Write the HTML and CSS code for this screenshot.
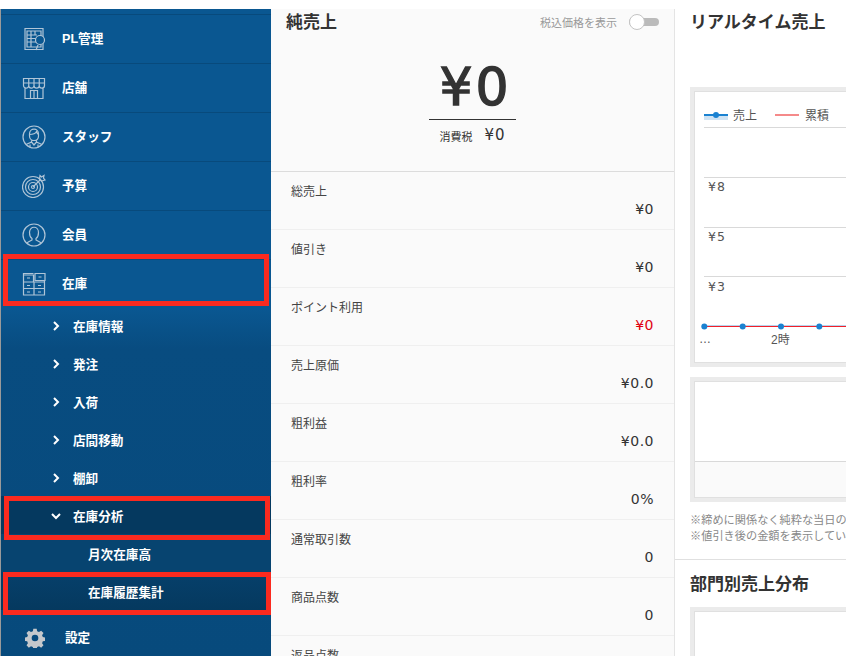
FILE: index.html
```html
<!DOCTYPE html>
<html lang="ja">
<head>
<meta charset="utf-8">
<title>純売上</title>
<link rel="stylesheet" href="styles.css">
</head>
<body>
<div class="page">
  <nav class="sidebar">
    <div class="nav-cap"></div>
    <a class="nav-item">
      <svg class="nav-icon" viewBox="0 0 24 24"><path d="M3 1.500h18v21H3zM5 4h14v16H5zM5 8h10M5 11.500h10M5 15h10M9 4v16M13 4v4"/><circle class="icon-fill" cx="18" cy="13" r="4.500"/><path d="M16 18l-2 5"/></svg>
      <span>PL管理</span>
    </a>
    <a class="nav-item">
      <svg class="nav-icon" viewBox="0 0 24 24"><path d="M1.500 2.500h21v4.500h-21zM1.500 7v2.500a2.500 2.500 0 0 0 5.250 0 2.600 2.600 0 0 0 5.250 0 2.600 2.600 0 0 0 5.250 0 2.600 2.600 0 0 0 5.250 0V7M6.750 2.500v7M12 2.500v7M17.250 2.500v7M3 12v10.500h18V12M8.500 22.500v-8h7v8M12 14.500v8"/></svg>
      <span>店舗</span>
    </a>
    <a class="nav-item">
      <svg class="nav-icon" viewBox="0 0 24 24"><circle cx="12" cy="12" r="11"/><path d="M7.500 9c0-6.500 9-6.500 9 0v2c0 6-9 6-9 0zM7.500 9.500c3 0 6-1 7-3 .3 1.500 1 2.500 2 3M9.500 15.500v1.500l-5.500 2.500M14.500 15.500v1.500l5.500 2.500M9.500 17l2.500 3 2.500-3M8 22.500v-3M16 22.500v-3"/></svg>
      <span>スタッフ</span>
    </a>
    <a class="nav-item">
      <svg class="nav-icon" viewBox="0 0 24 24"><circle cx="11" cy="13" r="10.500"/><circle cx="11" cy="13" r="7.500"/><circle cx="11" cy="13" r="4.500"/><circle cx="11" cy="13" r="1.500"/><path d="M11 13l8-8M18 1.500l-.5 3.500 2 2 3.500-1-1.500-2 .5-2.500-2.500 1.500z"/></svg>
      <span>予算</span>
    </a>
    <a class="nav-item">
      <svg class="nav-icon" viewBox="0 0 24 24"><circle cx="12" cy="12" r="11"/><path d="M7.500 9.500c0-7 9-7 9 0 0 2.500-1 5-2.500 6v1.500l5.500 3M7.500 9.500c0 2.500 1 5 2.500 6v1.500l-5.500 3"/></svg>
      <span>会員</span>
    </a>
    <a class="nav-item nav-item-last">
      <svg class="nav-icon" viewBox="0 0 24 24"><path d="M1.500 3h10v7h-10zM13 1.500h10v7H13zM1.500 10h21M1.500 10v13h21V8.500M1.500 16.500h21M12 10v13M1.500 3V1.500h10M5 6h3M16.500 5h3M5 13.500h3M16 13.500h3M5 20h3M16 20h3"/></svg>
      <span>在庫</span>
    </a>
    <div class="sub-list">
      <a class="sub-item"><svg class="chev" viewBox="0 0 10 10"><path d="M3 1l4 4-4 4"/></svg><span>在庫情報</span></a>
      <a class="sub-item"><svg class="chev" viewBox="0 0 10 10"><path d="M3 1l4 4-4 4"/></svg><span>発注</span></a>
      <a class="sub-item"><svg class="chev" viewBox="0 0 10 10"><path d="M3 1l4 4-4 4"/></svg><span>入荷</span></a>
      <a class="sub-item"><svg class="chev" viewBox="0 0 10 10"><path d="M3 1l4 4-4 4"/></svg><span>店間移動</span></a>
      <a class="sub-item"><svg class="chev" viewBox="0 0 10 10"><path d="M3 1l4 4-4 4"/></svg><span>棚卸</span></a>
      <a class="sub-item sub-open"><svg class="chev" viewBox="0 0 10 10"><path d="M1 3l4 4 4-4"/></svg><span>在庫分析</span></a>
      <a class="leaf-item">月次在庫高</a>
      <a class="leaf-item leaf-active">在庫履歴集計</a>
    </div>
    <a class="nav-item nav-settings">
      <svg class="gear" viewBox="0 0 24 24"><path fill-rule="evenodd" d="M10 1h4l.6 3 2.200.9 2.600-1.700 2.800 2.800-1.700 2.600.9 2.200 3 .6v4l-3 .6-.9 2.200 1.700 2.600-2.800 2.800-2.600-1.700-2.200.9-.6 3h-4l-.6-3-2.200-.9-2.600 1.700-2.800-2.800 1.700-2.600-.9-2.200-3-.6v-4l3-.6.9-2.200-1.700-2.600 2.800-2.800 2.600 1.700 2.200-.9zM12 8a4 4 0 1 0 0 8 4 4 0 0 0 0-8z"/></svg>
      <span>設定</span>
    </a>
    <div class="mark mark-a"></div>
    <div class="mark mark-b"></div>
    <div class="mark mark-c"></div>
  </nav>

  <main class="sales">
    <header class="sales-head">
      <div class="sales-title-row">
        <h2 class="title">純売上</h2>
        <div class="tax-toggle"><span>税込価格を表示</span><span class="switch"><span class="knob"></span></span></div>
      </div>
      <div class="total">¥0</div>
      <div class="tax-line"><small>消費税</small><span>¥0</span></div>
    </header>
    <div class="row"><div class="row-label">総売上</div><div class="row-value">¥0</div></div>
    <div class="row"><div class="row-label">値引き</div><div class="row-value">¥0</div></div>
    <div class="row"><div class="row-label">ポイント利用</div><div class="row-value negative">¥0</div></div>
    <div class="row"><div class="row-label">売上原価</div><div class="row-value">¥0.0</div></div>
    <div class="row"><div class="row-label">粗利益</div><div class="row-value">¥0.0</div></div>
    <div class="row"><div class="row-label">粗利率</div><div class="row-value">0%</div></div>
    <div class="row"><div class="row-label">通常取引数</div><div class="row-value">0</div></div>
    <div class="row"><div class="row-label">商品点数</div><div class="row-value">0</div></div>
    <div class="row"><div class="row-label">返品点数</div><div class="row-value">0</div></div>
  </main>

  <aside class="realtime">
    <h2 class="title realtime-title">リアルタイム売上</h2>
    <div class="frame chart-frame">
      <svg class="chart" width="152" height="270" viewBox="0 0 152 270">
        <path class="legend-band" d="M9 24h24v5H9z"/>
        <path class="legend-blue" d="M9 24h24"/>
        <circle class="dot" cx="21" cy="24" r="3"/>
        <text class="legend-text" x="38" y="29">売上</text>
        <path class="legend-red" d="M80 24h24"/>
        <text class="legend-text" x="110" y="29">累積</text>
        <path class="grid" d="M9 36.500h143M9 86.500h143M9 136.500h143M9 185.500h143"/>
        <text class="axis-text" x="13" y="100">¥8</text>
        <text class="axis-text" x="13" y="150">¥5</text>
        <text class="axis-text" x="13" y="200">¥3</text>
        <path class="series-blue" d="M9 235h143"/>
        <path class="series-red" d="M9 235.500h143"/>
        <circle class="dot" cx="9.300" cy="235.500" r="3"/>
        <circle class="dot" cx="47.700" cy="235.500" r="3"/>
        <circle class="dot" cx="86" cy="235.500" r="3"/>
        <circle class="dot" cx="124.300" cy="235.500" r="3"/>
        <text class="axis-label" x="4" y="252">…</text>
        <text class="axis-label" x="76" y="253">2時</text>
      </svg>
    </div>
    <div class="frame table-frame">
      <div class="table-body"></div>
      <div class="table-foot"></div>
    </div>
    <div class="notes">
      <p>※締めに関係なく純粋な当日の売上を表示しています。</p>
      <p>※値引き後の金額を表示しています。</p>
    </div>
    <section class="dept">
      <h2 class="title">部門別売上分布</h2>
      <div class="frame dept-frame"></div>
    </section>
  </aside>
</div>
</body>
</html>
```
FILE: styles.css
```css
* { box-sizing: border-box; }
html, body { margin: 0; padding: 0; height: 100%; overflow: hidden; background: #fff; }
body { font-family: "Liberation Sans", "Noto Sans CJK JP", sans-serif; color: #333; }

.page { display: flex; width: 846px; height: 656px; padding-top: 9px; overflow: hidden; }

/* sidebar */
.sidebar {
  position: relative;
  flex: 0 0 271px;
  height: 647px;
  border-left: 1px solid #9a9a9a;
  background: linear-gradient(#0a5791 0, #0a5791 300px, #084c80 340px, #074a7c 100%);
  color: #fff;
  overflow: hidden;
}
.nav-cap { height: 6px; border-bottom: 1px solid #084a7c; }
.nav-item {
  display: flex;
  align-items: center;
  height: 49px;
  padding-left: 21px;
  border-bottom: 1px solid #084a7c;
  font-size: 12.600px;
  font-weight: 700;
}
.nav-item span { margin-bottom: 4px; }
.nav-icon {
  flex: 0 0 24px;
  width: 24px;
  height: 24px;
  margin-right: 16px;
  fill: none;
  stroke: #b0c5d7;
  stroke-width: 1.200;
}
.icon-fill { fill: #0a5791; }
.nav-item-last { height: 46px; border-bottom: 0; }
.nav-item-last span { margin-bottom: 2px; }
.nav-item-last .nav-icon { margin-top: 2px; }
.sub-item, .leaf-item {
  display: flex;
  align-items: center;
  height: 38px;
  font-size: 12.600px;
  font-weight: 700;
}
.sub-item { padding-left: 50px; }
.sub-item span { margin-left: 12px; }
.chev {
  width: 10px;
  height: 10px;
  margin-top: 2px;
  fill: none;
  stroke: #fff;
  stroke-width: 2;
}
.sub-open { background: #05395f; }
.leaf-item { padding-left: 87px; background: #074470; }
.leaf-active { background: linear-gradient(#06406b, #05395f); }
.nav-settings { height: 52px; padding-left: 24px; border-bottom: 0; }
.nav-settings span { margin-bottom: 0; }
.gear { width: 20px; height: 20px; margin-top: 4px; margin-right: 20px; fill: #c4c8cc; }
.mark { position: absolute; border: 5px solid #fb2a1f; }
.mark-a { left: 2px; top: 245px; width: 266px; height: 52px; }
.mark-b { left: 3px; top: 487px; width: 266px; height: 44px; }
.mark-c { left: 2px; top: 563px; width: 268px; height: 43px; }

/* middle column */
.sales {
  flex: 0 0 404px;
  height: 647px;
  background: #fafafa;
  border-right: 1px solid #e4e4e4;
  overflow: hidden;
}
.sales-head { height: 163px; padding: 4px 15px 0; border-bottom: 1px solid #dcdcdc; }
.sales-title-row { display: flex; align-items: center; justify-content: space-between; height: 20px; }
.title { margin: 0; font-size: 17px; line-height: 20px; font-weight: 700; color: #333; }
.tax-toggle { display: flex; align-items: center; gap: 12px; margin-top: -2px; font-size: 11px; color: #999; }
.switch { position: relative; display: block; width: 30px; height: 8px; border-radius: 4px; background: #bbb; }
.knob {
  position: absolute;
  left: 0;
  top: -4px;
  width: 16px;
  height: 16px;
  border: 1px solid #c4c4c4;
  border-radius: 50%;
  background: #fff;
}
.total {
  margin-top: 26px;
  padding-left: 6px;
  text-align: center;
  font-family: "DejaVu Sans", sans-serif;
  font-size: 52px;
  line-height: 56px;
  letter-spacing: 3px;
  -webkit-text-stroke: 1.400px #333;
  color: #333;
}
.tax-line {
  display: flex;
  justify-content: center;
  align-items: center;
  gap: 12px;
  width: 87px;
  height: 30px;
  margin: 4px auto 0;
  border-top: 1px solid #333;
  font-family: "DejaVu Sans", sans-serif;
  font-size: 15px;
  letter-spacing: 1px;
  white-space: nowrap;
}
.tax-line small { margin-top: 3px; font-family: "Liberation Sans", "Noto Sans CJK JP", sans-serif; font-size: 11px; letter-spacing: 0; }
.row { height: 58px; padding: 12px 20px 0; border-bottom: 1px solid #efefef; }
.row-label { font-size: 12px; line-height: 16px; color: #444; }
.row-value {
  margin-top: 0;
  text-align: right;
  font-family: "DejaVu Sans", sans-serif;
  font-size: 14px;
  line-height: 18px;
  letter-spacing: .5px;
  color: #333;
}
.negative { color: #e00012; }

/* right column */
.realtime { flex: 0 0 600px; height: 647px; padding: 4px 0 0 15px; background: #fff; }
.frame { width: 400px; border: 4px solid #ebebeb; outline: 1px solid #e0e0e0; outline-offset: -5px; background: #fff; }
.chart-frame { height: 280px; margin-top: 54px; }
.chart { display: block; margin: 0 0 0 1px; }
.legend-band { fill: #cfe3f3; }
.legend-blue { stroke: #1a82d1; stroke-width: 2; }
.legend-red { stroke: #f58a8a; stroke-width: 2; }
.legend-text { font-size: 12px; fill: #555; }
.axis-text { font-family: "DejaVu Sans", sans-serif; font-size: 12.500px; letter-spacing: 1px; fill: #555; }
.axis-label { font-size: 12px; fill: #555; }
.grid { stroke: #d9d9d9; stroke-width: 1; fill: none; }
.series-blue { stroke: #6fa8d8; stroke-width: 1; }
.series-red { stroke: #f0202a; stroke-width: 1; }
.dot { fill: #1a82d1; }
.table-frame { display: flex; flex-direction: column; height: 125px; margin-top: 10px; }
.table-body { height: 80px; border-bottom: 1px solid #d9d9d9; margin: 1px 1px 0; }
.table-foot { flex: 1; margin: 0 1px 1px; background: #fafafa; }
.notes { margin-top: 10px; font-size: 11.200px; line-height: 16px; color: #888; white-space: nowrap; }
.notes p { margin: 0; }
.dept { margin: 15px 0 0 -15px; padding: 15px 0 0 15px; border-top: 1px solid #e0e0e0; }
.dept-frame { height: 120px; margin-top: 12px; }
```
